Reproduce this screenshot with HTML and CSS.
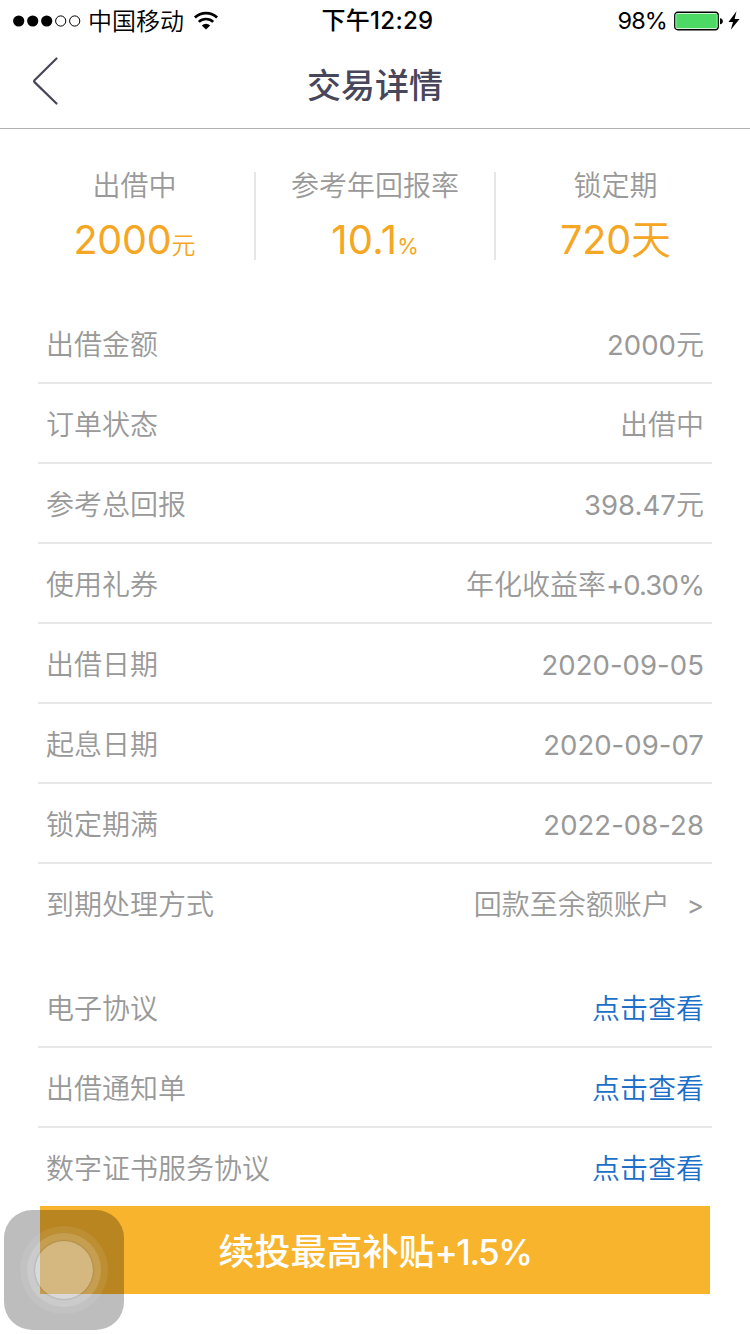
FILE: index.html
```html
<!DOCTYPE html>
<html lang="zh-CN">
<head>
    <meta charset="UTF-8">
    <meta name="viewport" content="width=device-width, initial-scale=1.0">
    <title>交易详情</title>
    <link rel="stylesheet" href="styles.css">
</head>
<body>

    <!-- 状态栏 -->
    <div class="status-bar">
        <div class="status-left">
            <svg class="signal" width="68" height="12" viewBox="0 0 68 12">
                <circle cx="5.7" cy="6" r="5.6"/>
                <circle cx="19.7" cy="6" r="5.6"/>
                <circle cx="33.7" cy="6" r="5.6"/>
                <circle cx="47.7" cy="6" r="5.1" fill="none" stroke="#000"/>
                <circle cx="61.7" cy="6" r="5.1" fill="none" stroke="#000"/>
            </svg>
            <span class="carrier">中国移动</span>
            <svg class="wifi" width="26" height="20" viewBox="0 0 26 20">
                <path d="M1.9 6.6A15.9 15.9 0 0 1 24.1 6.6" fill="none" stroke="#000" stroke-width="2.8"/>
                <path d="M5.8 10.9A10.3 10.3 0 0 1 20.2 10.9" fill="none" stroke="#000" stroke-width="2.6"/>
                <path d="M13 18.6L8.8 14.5A6 6 0 0 1 17.2 14.5Z"/>
            </svg>
        </div>
        <div class="status-time">下午12:29</div>
        <div class="status-right">
            <span class="percent">98%</span>
            <svg class="battery" width="68" height="20" viewBox="0 0 68 20">
                <rect x="0.75" y="1.25" width="43.5" height="17.5" rx="3" fill="#fff" stroke="#000" stroke-width="1.3"/>
                <rect x="2.2" y="2.7" width="40.6" height="14.6" rx="1" fill="#4cd964"/>
                <path d="M46 7.2Q48.8 7.6 48.8 10.2T46 13.2Z"/>
                <path d="M62.5 0.3L54.5 11.1H59L56.8 18.8L65.6 7.9H60.6Z"/>
            </svg>
        </div>
    </div>

    <!-- 标题 -->
    <header class="header">
        <svg class="back" width="28" height="50" viewBox="0 0 28 50">
            <path d="M25.5 2.5L3.5 24.3Q2.6 25.2 3.5 26.1L25.5 47.5" fill="none" stroke="#47465a" stroke-width="2.2" stroke-linecap="round"/>
        </svg>
        <h1 class="title">交易详情</h1>
    </header>

    <section class="summary">
        <div class="summary-item">
            <div class="summary-label">出借中</div>
            <div class="summary-value"><span class="num">2000</span><small>元</small></div>
        </div>
        <div class="summary-item">
            <div class="summary-label">参考年回报率</div>
            <div class="summary-value rate"><span class="num">10.1</span><small>%</small></div>
        </div>
        <div class="summary-item">
            <div class="summary-label">锁定期</div>
            <div class="summary-value"><span class="num">720</span>天</div>
        </div>
    </section>

    <ul class="list">
        <li><span>出借金额</span><span><span class="num">2000</span>元</span></li>
        <li><span>订单状态</span><span>出借中</span></li>
        <li><span>参考总回报</span><span><span class="num">398.47</span>元</span></li>
        <li><span>使用礼券</span><span>年化收益率<span class="num bonus">+0.30%</span></span></li>
        <li><span>出借日期</span><span class="num">2020-09-05</span></li>
        <li><span>起息日期</span><span class="num">2020-09-07</span></li>
        <li><span>锁定期满</span><span class="num">2022-08-28</span></li>
        <li><span>到期处理方式</span><span class="more">回款至余额账户<i>&gt;</i></span></li>
    </ul>

    <ul class="list agreements">
        <li><span>电子协议</span><a class="link">点击查看</a></li>
        <li><span>出借通知单</span><a class="link">点击查看</a></li>
        <li><span>数字证书服务协议</span><a class="link">点击查看</a></li>
    </ul>

    <button class="renew-btn">续投最高补贴<span class="renew-rate">+1.5%</span></button>

    <!-- 悬浮按钮 -->
    <div class="assistive">
        <div class="ring ring-outer">
            <div class="ring ring-middle">
                <div class="ring ring-inner"></div>
            </div>
        </div>
    </div>

</body>
</html>
```
FILE: styles.css
```css
* {
    box-sizing: border-box;
}

body {
    margin: 0;
    height: 1334px;
    overflow: hidden;
    position: relative;
    background-color: #fff;
    color: #999;
    font-family: Inter, "Noto Sans CJK SC", sans-serif;
    font-size: 28px;
    font-weight: 350;
}

.num {
    font-size: 27.5px;
    font-weight: 400;
    letter-spacing: 0.05px;
}

/* 状态栏 */
.status-bar {
    display: grid;
    grid-template-columns: 1fr auto 1fr;
    align-items: center;
    height: 40px;
    padding: 0 8px 0 13px;
    color: #000;
    font-size: 24px;
    line-height: 40px;
}

.status-left,
.status-right {
    display: flex;
    align-items: center;
}

.status-right {
    justify-content: flex-end;
    font-size: 23.5px;
    font-weight: 400;
    letter-spacing: -0.9px;
}

.carrier {
    margin: 2px 9px 0 7px;
}

.status-time {
    font-weight: 500;
    letter-spacing: 0.3px;
}

.percent {
    margin-right: 7px;
}

.battery {
    margin-top: -1px;
}

/* 标题 */
.header {
    display: grid;
    grid-template-columns: 60px 1fr 60px;
    align-items: center;
    height: 89px;
    border-bottom: 1px solid #b2b2b2;
}

.back {
    margin: -6px 0 0 31px;
}

.title {
    margin: 3px 0 0;
    color: #47465a;
    font-size: 34px;
    font-weight: 500;
    line-height: 50px;
    text-align: center;
}

/* 汇总 */
.summary {
    display: grid;
    grid-template-columns: 239px 240px 241px;
    grid-template-rows: 88px;
    justify-content: center;
    margin-top: 43px;
    text-align: center;
}

.summary-item + .summary-item {
    border-left: 2px solid #e6e6e6;
}

.summary-label {
    line-height: 28px;
}

.summary-value {
    margin-top: 14px;
    color: #f5a623;
    font-size: 40px;
    line-height: 52px;
}

.summary-value .num {
    font-size: 39.5px;
    letter-spacing: -0.2px;
}

.summary-value small {
    font-size: 24px;
}

.rate .num {
    font-size: 40px;
    letter-spacing: 0.3px;
}

.rate small {
    font-size: 22px;
    font-weight: 400;
}

/* 列表 */
.list {
    margin: 44px 38px 0;
    padding: 0;
    list-style: none;
}

.list li {
    display: flex;
    justify-content: space-between;
    height: 80px;
    padding: 0 8px;
    border-bottom: 2px solid #e8e8e8;
    line-height: 82px;
}

.list li:last-child {
    border-bottom: none;
}

.list .bonus {
    letter-spacing: -0.9px;
}

.more i {
    margin-left: 17px;
    font-size: 26px;
    font-style: normal;
    font-weight: 400;
}

.agreements {
    margin-top: 24px;
}

.link {
    color: #1b6fc9;
}

.renew-btn {
    display: block;
    width: 670px;
    height: 88px;
    margin: -2px auto 0;
    padding: 0 0 2px;
    border: none;
    background-color: #f8b42d;
    color: #fff;
    font-family: inherit;
    font-size: 36px;
    font-weight: 500;
}

.renew-rate {
    font-size: 35px;
    letter-spacing: -1.5px;
}

/* 悬浮按钮 */
.assistive {
    display: flex;
    align-items: center;
    justify-content: center;
    position: absolute;
    left: 4px;
    top: 1210px;
    width: 120px;
    height: 120px;
    border-radius: 28px;
    background-color: rgba(0, 0, 0, 0.26);
}

.ring {
    display: flex;
    align-items: center;
    justify-content: center;
    border-radius: 50%;
}

.ring-outer {
    width: 88px;
    height: 88px;
    background-color: rgba(255, 255, 255, 0.08);
}

.ring-middle {
    width: 74px;
    height: 74px;
    background-color: rgba(255, 255, 255, 0.15);
}

.ring-inner {
    width: 58px;
    height: 58px;
    background-color: rgba(255, 255, 255, 0.27);
    box-shadow: 0 0 2px rgba(0, 0, 0, 0.3);
}
```
